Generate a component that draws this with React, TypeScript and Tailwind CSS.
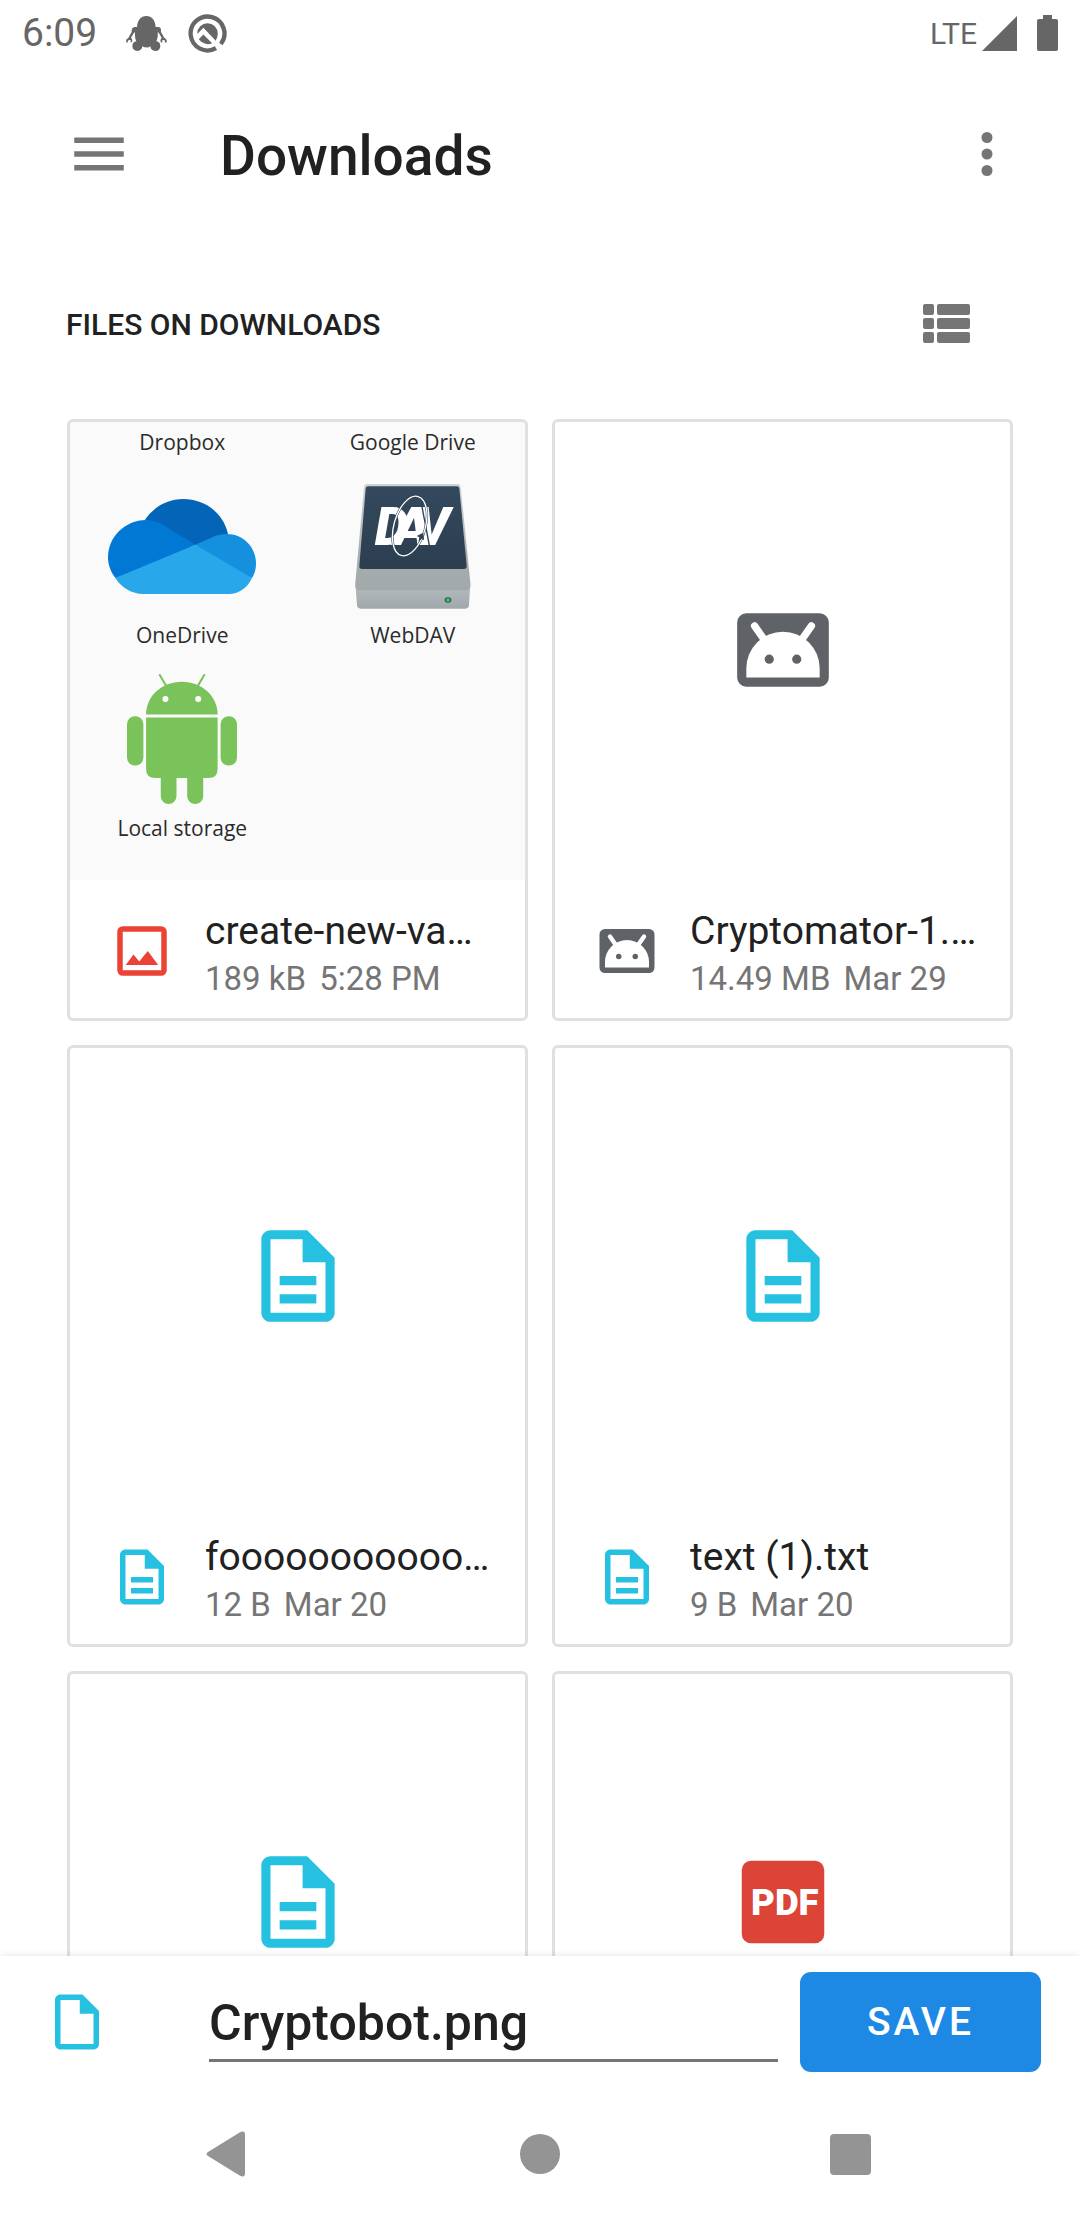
import type { ReactNode } from "react";

type IconProps = { className: string };

function TextFileIcon({ className }: IconProps) {
  return (
    <svg viewBox="0 0 24 24" className={className} fill="#26c1e1" aria-hidden="true">
      <path
        fillRule="evenodd"
        d="M14 2H6c-1.1 0-2 .9-2 2v16c0 1.1.9 2 2 2h12c1.1 0 2-.9 2-2V8l-6-6zM6 20V4h7v5h5v11H6z"
      />
      <path d="M8 12h8v2H8zM8 16h8v2H8z" />
    </svg>
  );
}

function BlankFileIcon({ className }: IconProps) {
  return (
    <svg viewBox="0 0 24 24" className={className} fill="#26c1e1" aria-hidden="true">
      <path
        fillRule="evenodd"
        d="M14 2H6c-1.1 0-2 .9-2 2v16c0 1.1.9 2 2 2h12c1.1 0 2-.9 2-2V8l-6-6zM6 20V4h7v5h5v11H6z"
      />
    </svg>
  );
}

function ApkIcon({ className }: IconProps) {
  return (
    <svg viewBox="0 0 24 24" className={className} aria-hidden="true">
      <rect x="2" y="4" width="20" height="16" rx="2" fill="#5f6368" />
      <path d="M4 18v-2a8 8 0 0 1 16 0v2z" fill="#fff" />
      <path d="M5.8 6.75l2.1 3M18.2 6.75l-2.1 3" stroke="#fff" strokeWidth="1.6" strokeLinecap="round" />
      <circle cx="9" cy="14" r="1" fill="#5f6368" />
      <circle cx="15" cy="14" r="1" fill="#5f6368" />
    </svg>
  );
}

function ImageIcon({ className }: IconProps) {
  return (
    <svg viewBox="0 0 24 24" className={className} fill="#ea4335" aria-hidden="true">
      <path
        fillRule="evenodd"
        d="M5 3h14a2 2 0 0 1 2 2v14a2 2 0 0 1-2 2H5a2 2 0 0 1-2-2V5a2 2 0 0 1 2-2zM5 5v14h14V5z"
      />
      <path d="M6.1 17.1l2.8-3.8 2.1 2.5 3.1-3.8 3.8 5.1z" />
    </svg>
  );
}

function PdfIcon({ className }: IconProps) {
  return (
    <svg viewBox="0 0 24 24" className={className} aria-hidden="true">
      <rect x="3" y="3" width="18" height="18" rx="2" fill="#db4437" />
      <text
        x="12.4"
        y="14.9"
        textAnchor="middle"
        fill="#fff"
        fontFamily="Roboto, sans-serif"
        fontWeight="900"
        fontSize="8"
      >
        PDF
      </text>
    </svg>
  );
}

function OneDriveLogo() {
  return (
    <svg viewBox="174 293 444 285" className="w-[148px]" aria-hidden="true">
      <path
        fill="#0364b8"
        d="M284 357C310 318 350 293 400 293C465 293 520 335 534 398L500 420L436 432L300 380Z"
      />
      <path
        fill="#0078d4"
        d="M288 356C225 357 174 406 174 468C174 490 182 512 196 530L300 500L436 430L340 371C323 361 306 356 288 356Z"
      />
      <path
        fill="#1490df"
        d="M436 430L490 406C503 401 516 398 530 398C580 398 618 438 618 487C618 502 614 517 606 530L520 500Z"
      />
      <path
        fill="#28a8ea"
        d="M436 430L196 530C214 559 245 578 280 578H536C566 578 592 560 606 530Z"
      />
    </svg>
  );
}

function WebDavLogo() {
  return (
    <svg viewBox="45 38 348 375" className="w-[116px]" aria-hidden="true">
      <defs>
        <linearGradient id="screen" x1="0" y1="0" x2="0" y2="1">
          <stop offset="0" stopColor="#34495e" />
          <stop offset="1" stopColor="#2c3e50" />
        </linearGradient>
        <linearGradient id="front" x1="0" y1="0" x2="0" y2="1">
          <stop offset="0" stopColor="#b6bdc1" />
          <stop offset="1" stopColor="#a1a8aa" />
        </linearGradient>
        <linearGradient id="shell" x1="0" y1="0" x2="0" y2="1">
          <stop offset="0" stopColor="#cdd3d5" />
          <stop offset="0.7" stopColor="#a6adaf" />
          <stop offset="1" stopColor="#a3a9ab" />
        </linearGradient>
      </defs>
      <path
        fill="url(#front)"
        d="M46 335H391L387 402Q386 412 376 412H62Q52 412 51 402Z"
      />
      <path
        fill="url(#shell)"
        d="M83 38H352Q361 38 362 47L391 335V345Q390 357 378 357H59Q47 357 46 345V335L72 47Q73 38 83 38Z"
      />
      <path
        fill="url(#screen)"
        d="M84 45H351Q357 45 358 51L380 284Q381 293 372 293H66Q57 293 58 284L77 51Q78 45 84 45Z"
      />
      <text
        x="104 162 226"
        y="221"
        fill="#fff"
        fontFamily="Roboto, sans-serif"
        fontWeight="900"
        fontStyle="italic"
        fontSize="162"
      >
        DAV
      </text>
      <path d="M246 106l22 116" stroke="#2f4256" strokeWidth="4" />
      <ellipse
        cx="209"
        cy="164"
        rx="47"
        ry="92"
        transform="rotate(16 209 164)"
        fill="none"
        stroke="#2f4256"
        strokeWidth="7"
      />
      <ellipse
        cx="209"
        cy="164"
        rx="47"
        ry="92"
        transform="rotate(16 209 164)"
        fill="none"
        stroke="#fff"
        strokeWidth="4"
      />
      <path d="M250 184l-20 10 8 4-3 14 10-10 7 5z" fill="#2f4256" />
      <ellipse cx="324" cy="386" rx="10" ry="8" fill="#2f5a48" />
      <ellipse cx="324" cy="386" rx="6" ry="5" fill="#2ecc71" />
    </svg>
  );
}

function AndroidLogo() {
  return (
    <svg viewBox="232 42 329 390" className="w-[110px]" fill="#7ac25a" aria-hidden="true">
      <path d="M289 163C289 108 336 65 396 65S503 108 503 163Z" />
      <path d="M330 45l20 34M463 45l-20 34" stroke="#7ac25a" strokeWidth="6" strokeLinecap="round" />
      <circle cx="347" cy="117" r="9" fill="#fff" />
      <circle cx="445" cy="117" r="9" fill="#fff" />
      <path d="M289 172H503V326Q503 353 476 353H316Q289 353 289 326Z" />
      <rect x="232" y="168" width="49" height="148" rx="24" />
      <rect x="512" y="168" width="49" height="148" rx="24" />
      <path d="M333 340H380V407a23.5 24 0 0 1-47 0ZM412 340H460V407a24 24 0 0 1-48 0Z" />
    </svg>
  );
}

function Provider({ logo, label }: { logo?: ReactNode; label: string }) {
  return (
    <div className="flex flex-col">
      {logo && <div className="flex h-[163px] items-center justify-center pt-4">{logo}</div>}
      <span className="text-center leading-[30px]">{label}</span>
    </div>
  );
}

function VaultPreview() {
  return (
    <div className="grid h-full w-full grid-cols-2 content-start bg-[#fafafa] pt-2 font-['Open_Sans',sans-serif] text-[21px] text-[#2b2b2b]">
      <Provider label="Dropbox" />
      <Provider label="Google Drive" />
      <Provider logo={<OneDriveLogo />} label="OneDrive" />
      <Provider logo={<WebDavLogo />} label="WebDAV" />
      <Provider logo={<AndroidLogo />} label="Local storage" />
    </div>
  );
}

type FileEntry = {
  id: string;
  preview: ReactNode;
  icon?: ReactNode;
  name?: string;
  size?: string;
  date?: string;
};

const files: FileEntry[] = [
  {
    id: "vault",
    preview: <VaultPreview />,
    icon: <ImageIcon className="size-[66px] shrink-0" />,
    name: "create-new-va…",
    size: "189 kB",
    date: "5:28 PM",
  },
  {
    id: "apk",
    preview: <ApkIcon className="size-[110px]" />,
    icon: <ApkIcon className="size-[66px] shrink-0" />,
    name: "Cryptomator-1.…",
    size: "14.49 MB",
    date: "Mar 29",
  },
  {
    id: "foo",
    preview: <TextFileIcon className="size-[110px]" />,
    icon: <TextFileIcon className="size-[66px] shrink-0" />,
    name: "fooooooooooo…",
    size: "12 B",
    date: "Mar 20",
  },
  {
    id: "text",
    preview: <TextFileIcon className="size-[110px]" />,
    icon: <TextFileIcon className="size-[66px] shrink-0" />,
    name: "text (1).txt",
    size: "9 B",
    date: "Mar 20",
  },
  { id: "document", preview: <TextFileIcon className="size-[110px]" /> },
  { id: "pdf", preview: <PdfIcon className="size-[110px]" /> },
];

function FileCard({ file }: { file: FileEntry }) {
  return (
    <li className="overflow-hidden rounded-md outline-3 -outline-offset-3 outline-[#e0e0e0]">
      <div className="flex aspect-square items-center justify-center">{file.preview}</div>
      {file.name && (
        <div className="flex h-[141px] items-center gap-[30px] pr-[30px] pl-[42px]">
          {file.icon}
          <div className="min-w-0 flex-1">
            <p className="truncate text-[39px] leading-[56px] text-[#212121]">{file.name}</p>
            <p className="flex gap-[13px] text-[33px] leading-[40px] text-[#757575]">
              <span>{file.size}</span>
              <span>{file.date}</span>
            </p>
          </div>
        </div>
      )}
    </li>
  );
}

function StatusBar() {
  return (
    <div className="flex h-[66px] shrink-0 items-center px-[22px] text-[#666]">
      <span className="text-[39px]">6:09</span>
      <svg viewBox="0 0 123 105" className="ml-[29px] w-[41px]" fill="currentColor" aria-hidden="true">
        <path d="M61 0C78 0 88 14 89 33H97Q105 34 105 42V48L112 60Q113 66 117 67Q124 71 122 78Q118 83 116 78Q119 72 112 72Q105 74 110 79Q104 82 103 74Q104 68 107 65L98 50L95 49C96 60 94 70 91 76Q103 78 103 90Q102 105 88 105Q74 104 73 91Q67 96 61 94Q54 95 49 91Q48 104 34 105Q20 104 19 91Q19 78 31 76C28 70 26 60 27 49L24 50L15 65Q19 68 19 74Q18 81 13 79Q18 73 10 72Q3 73 6 79Q2 82 0 76Q0 69 7 66L10 60L17 48V42Q18 34 25 33H33C34 14 44 0 61 0Z" />
      </svg>
      <svg viewBox="0 0 38 38" className="ml-[21px] w-[39px]" fill="none" aria-hidden="true">
        <path d="M27.25 33.3A16.5 16.5 0 1 1 32 29.2" stroke="currentColor" strokeWidth="4.2" />
        <path
          d="M9 19A10 10 0 0 1 29 19Q29 23 27 26L15 13.500L9.500 19ZM10.500 24.500L15 20L23.500 28.500Q20 30 17 29Q13 28 10.500 24.500Z"
          fill="currentColor"
        />
      </svg>
      <span className="ml-auto text-[30px]">LTE</span>
      <svg viewBox="0 0 35 35" className="ml-[5px] w-[35px]" fill="currentColor" aria-hidden="true">
        <path d="M35 0v35H0z" />
      </svg>
      <svg viewBox="0 0 21 36" className="ml-5 w-[21px]" fill="currentColor" aria-hidden="true">
        <path d="M6 0h9v4h4a2 2 0 0 1 2 2v28a2 2 0 0 1-2 2H2a2 2 0 0 1-2-2V6a2 2 0 0 1 2-2h4z" />
      </svg>
    </div>
  );
}

export default function App() {
  return (
    <div className="flex h-screen flex-col bg-white font-[Roboto,sans-serif] text-[#212121]">
      <StatusBar />

      <header className="flex h-[176px] shrink-0 items-center pr-[60px] pl-[66px] text-[#757575]">
        <button type="button" aria-label="Open menu">
          <svg viewBox="0 0 24 24" className="size-[66px]" fill="currentColor" aria-hidden="true">
            <path d="M3 18h18v-2H3v2zm0-5h18v-2H3v2zm0-7v2h18V6H3z" />
          </svg>
        </button>
        <h1 className="ml-[88px] flex-1 pt-1 text-[55px] font-medium text-[#212121]">Downloads</h1>
        <button type="button" aria-label="More options">
          <svg viewBox="0 0 24 24" className="size-[66px]" fill="currentColor" aria-hidden="true">
            <circle cx="12" cy="6" r="2" />
            <circle cx="12" cy="12" r="2" />
            <circle cx="12" cy="18" r="2" />
          </svg>
        </button>
      </header>

      <main className="flex min-h-0 flex-1 flex-col overflow-y-auto [scrollbar-width:none]">
        <div className="flex h-[164px] shrink-0 items-center justify-between pr-[100px] pl-[66px]">
          <h2 className="text-[30px] font-medium">FILES ON DOWNLOADS</h2>
          <button type="button" aria-label="List view" className="text-[#757575]">
            <svg viewBox="0 0 66 66" className="size-[66px]" fill="currentColor" aria-hidden="true">
              {[13, 27, 41].map((y) => (
                <g key={y}>
                  <rect x="9" y={y} width="11" height="11" rx="2" />
                  <rect x="23" y={y} width="33" height="11" rx="2" />
                </g>
              ))}
            </svg>
          </button>
        </div>
        <ul className="grid grid-cols-2 gap-6 px-[67px] pt-[13px]">
          {files.map((file) => (
            <FileCard key={file.id} file={file} />
          ))}
        </ul>
      </main>

      <form
        className="relative flex h-[132px] shrink-0 items-center bg-white pr-[39px] pl-11 shadow-[0_0_8px_rgba(0,0,0,0.12)]"
        onSubmit={(event) => event.preventDefault()}
      >
        <BlankFileIcon className="size-[66px] shrink-0" />
        <input
          type="text"
          aria-label="File name"
          defaultValue="Cryptobot.png"
          className="ml-[99px] h-20 min-w-0 flex-1 border-b-3 border-[#757575] pt-1 text-[50px] font-medium outline-none"
        />
        <button
          type="submit"
          className="ml-[22px] h-[100px] rounded-[11px] bg-[#1e88e5] px-[67px] text-[39px] font-medium tracking-[3px] text-white"
        >
          SAVE
        </button>
      </form>

      <nav className="relative flex h-[132px] shrink-0 items-center justify-center gap-[263px] bg-white text-[#949494]">
        <button type="button" aria-label="Back">
          <svg viewBox="0 0 48 48" className="size-12" fill="currentColor" aria-hidden="true">
            <path d="M3 22L35 2.300Q40 0 40 5V43Q40 48 35 45.700L3 26Q0 24 3 22Z" />
          </svg>
        </button>
        <button type="button" aria-label="Home">
          <svg viewBox="0 0 48 48" className="size-12" fill="currentColor" aria-hidden="true">
            <circle cx="24" cy="24" r="20" />
          </svg>
        </button>
        <button type="button" aria-label="Recent apps">
          <svg viewBox="0 0 48 48" className="size-12" fill="currentColor" aria-hidden="true">
            <rect x="3" y="4" width="41" height="41" rx="4" />
          </svg>
        </button>
      </nav>
    </div>
  );
}
